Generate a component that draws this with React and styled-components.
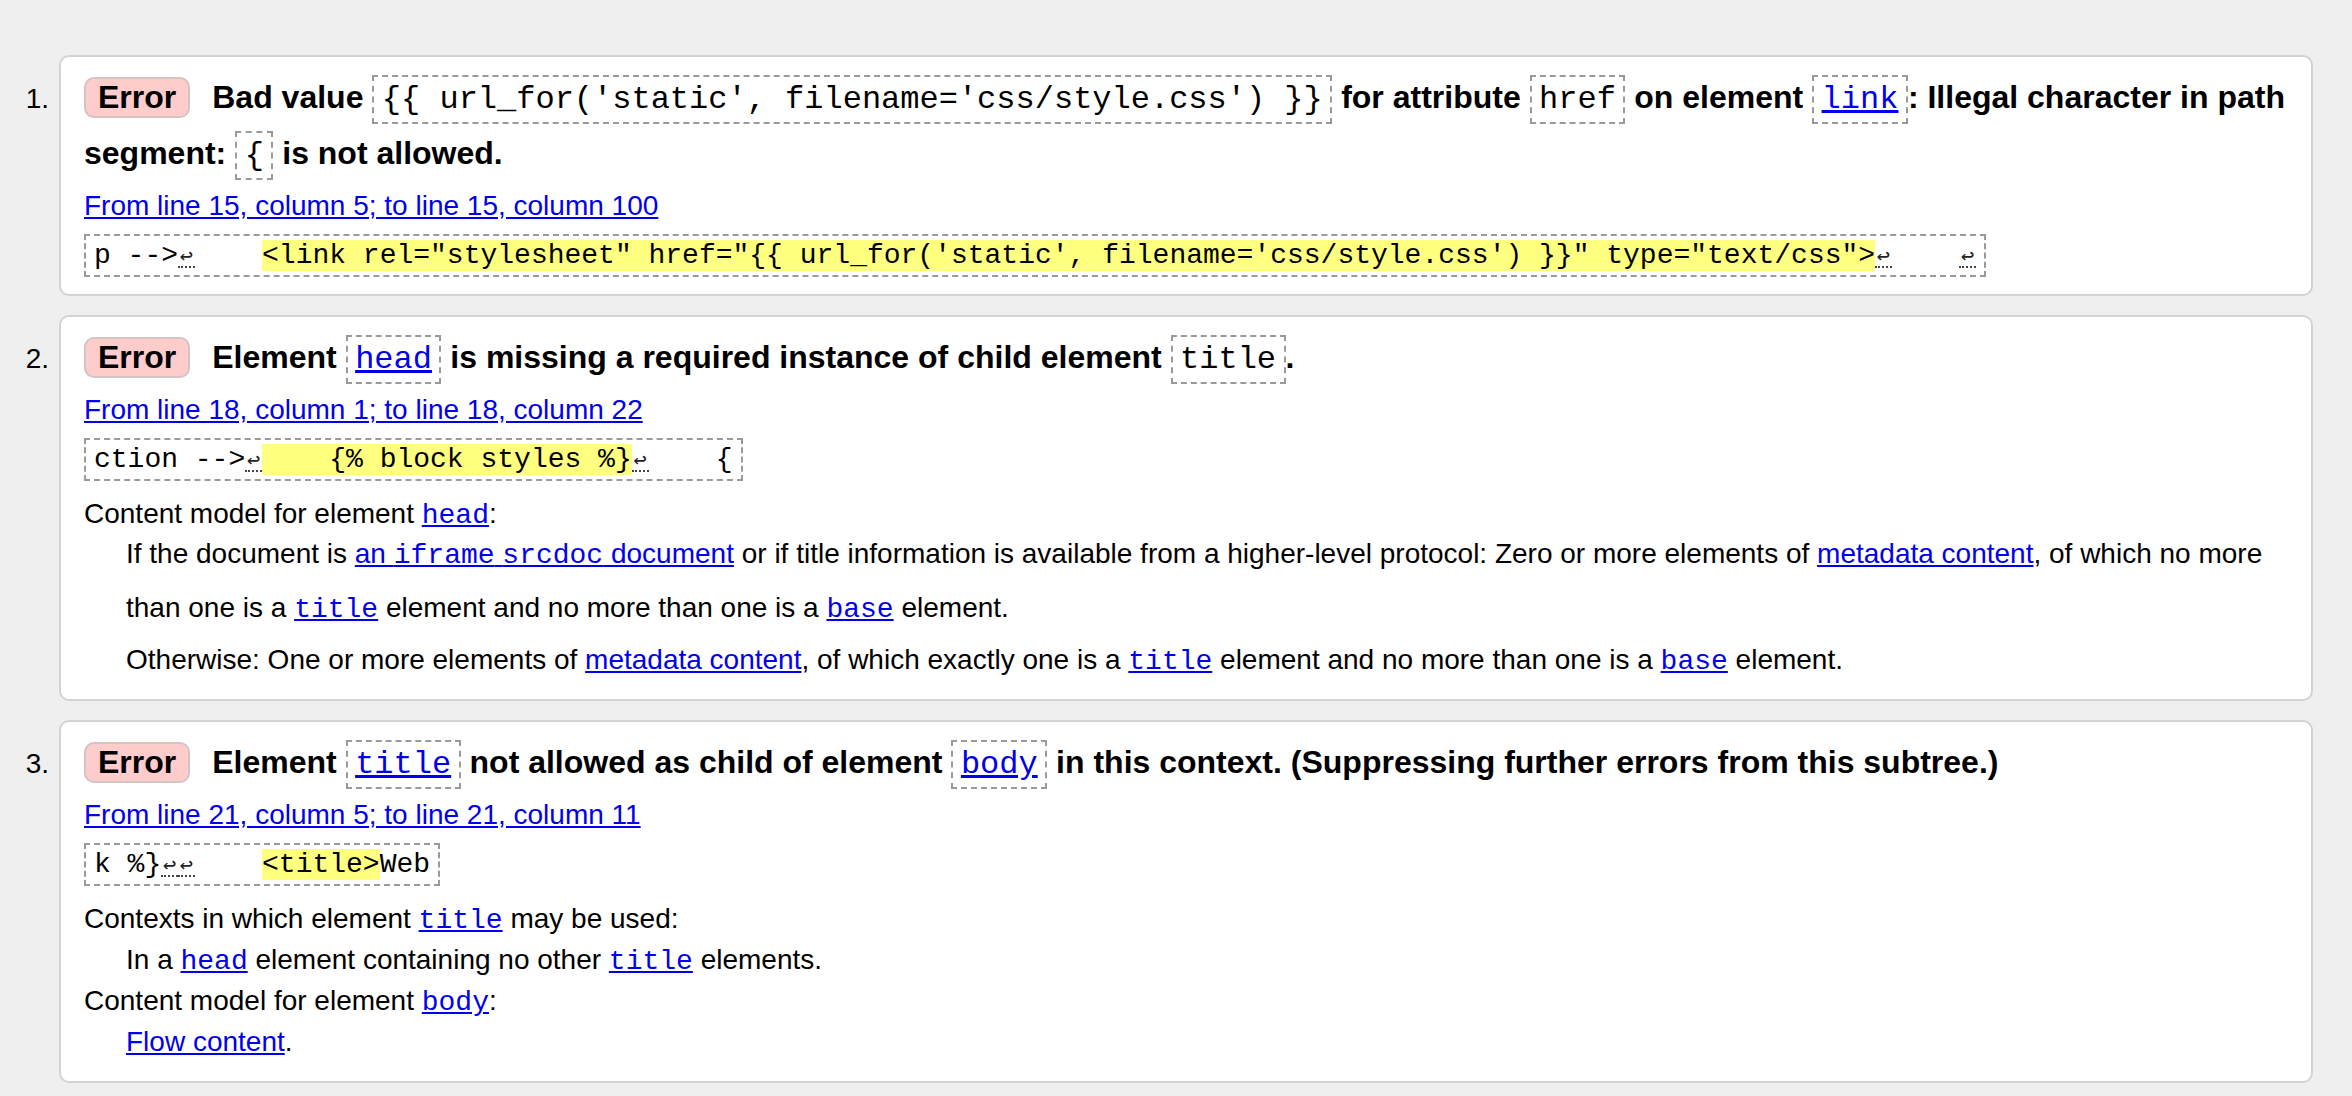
import React from "react";
import styled, { createGlobalStyle } from "styled-components";

const GlobalStyle = createGlobalStyle`
  html, body {
    margin: 0;
    padding: 0;
    background: #efefef;
  }
  body {
    font-family: "Liberation Sans", Arial, Helvetica, sans-serif;
    font-size: 28px;
    color: #000;
  }
`;

const Page = styled.ol`
  list-style: none;
  margin: 0;
  padding: 55px 39px 14px 0;
  display: flex;
  flex-direction: column;
  gap: 19px;
`;

const Item = styled.li`
  display: flex;
  align-items: baseline;
`;

const Num = styled.span`
  flex: none;
  width: 59px;
  box-sizing: border-box;
  padding-right: 10px;
  text-align: right;
  font-size: 28px;
`;

const Card = styled.div`
  flex: 1;
  min-width: 0;
  background: #fff;
  border: 2px solid #d3d3d3;
  border-radius: 10px;
  padding: 12px 8px 17px 23px;
`;

const Title = styled.p`
  margin: 0;
  font-weight: bold;
  font-size: 32px;
  line-height: 56px;
`;

const Badge = styled.span`
  display: inline-block;
  background: #ffcccc;
  border: 2px solid #d4c4c4;
  border-radius: 10px;
  padding: 1px 12px;
  line-height: 35px;
  margin-right: 22px;
`;

const CodeBox = styled.code`
  font-family: "Liberation Mono", "Courier New", monospace;
  font-size: 32px;
  font-weight: normal;
  line-height: 1;
  border: 2px dashed #9a9a9a;
  padding: 4px 7.5px;
`;

const A = styled.a`
  color: #0000ee;
  text-decoration: underline;
`;

const Mono = styled.code`
  font-family: "Liberation Mono", "Courier New", monospace;
  font-size: inherit;
  line-height: 1;
`;

const Location = styled.p`
  margin: 4px 0 0;
  line-height: 41px;
`;

const Extract = styled.div`
  width: fit-content;
  margin-top: 8px;
  border: 2px dashed #9a9a9a;
  padding: 4px 8px;
  font-family: "Liberation Mono", "Courier New", monospace;
  font-size: 28px;
  line-height: 31px;
  white-space: pre;
`;

const Hl = styled.span`
  background: #ffff80;
`;

const Lf = styled.span`
  display: inline-block;
  width: 16.8px;
  font-family: "DejaVu Sans Mono", "DejaVu Sans", monospace;
  font-size: 22px;
  line-height: 20px;
  text-align: center;
  color: #222;
  border-bottom: 2px dotted #444;
  box-sizing: border-box;
`;

const Details = styled.dl`
  margin: 12px 0 2px;
  line-height: 41px;
`;

const Term = styled.dt`
  margin: 0;
`;

const Desc = styled.dd`
  margin: 0 0 0 42px;
`;

const Para = styled.p`
  margin: ${(p) => (p.$first ? "-7px 0 0" : "4px 0 0")};
  line-height: ${(p) => (p.$first ? "54px" : "41px")};
`;

const LF = () => <Lf>↩</Lf>;

export default function App() {
  return (
    <>
      <GlobalStyle />
      <Page>
        <Item>
          <Num>1.</Num>
          <Card>
            <Title>
              <Badge>Error</Badge>Bad value{" "}
              <CodeBox>{"{{ url_for('static', filename='css/style.css') }}"}</CodeBox>{" "}
              for attribute <CodeBox>href</CodeBox> on element{" "}
              <CodeBox>
                <A href="#">link</A>
              </CodeBox>
              : Illegal character in path segment: <CodeBox>{"{"}</CodeBox> is not allowed.
            </Title>
            <Location>
              <A href="#">From line 15, column 5; to line 15, column 100</A>
            </Location>
            <Extract>
              {"p -->"}
              <LF />
              {"    "}
              <Hl>{`<link rel="stylesheet" href="{{ url_for('static', filename='css/style.css') }}" type="text/css">`}</Hl>
              <LF />
              {"    "}
              <LF />
            </Extract>
          </Card>
        </Item>

        <Item>
          <Num>2.</Num>
          <Card>
            <Title>
              <Badge>Error</Badge>Element{" "}
              <CodeBox>
                <A href="#">head</A>
              </CodeBox>{" "}
              is missing a required instance of child element <CodeBox>title</CodeBox>.
            </Title>
            <Location>
              <A href="#">From line 18, column 1; to line 18, column 22</A>
            </Location>
            <Extract>
              {"ction -->"}
              <LF />
              <Hl>{"    {% block styles %}"}</Hl>
              <LF />
              {"    {"}
            </Extract>
            <Details>
              <Term>
                Content model for element{" "}
                <A href="#">
                  <Mono>head</Mono>
                </A>
                :
              </Term>
              <Desc>
                <Para $first>
                  If the document is{" "}
                  <A href="#">
                    an <Mono>iframe</Mono> <Mono>srcdoc</Mono> document
                  </A>{" "}
                  or if title information is available from a higher-level protocol: Zero or more
                  elements of <A href="#">metadata content</A>, of which no more than one is a{" "}
                  <A href="#">
                    <Mono>title</Mono>
                  </A>{" "}
                  element and no more than one is a{" "}
                  <A href="#">
                    <Mono>base</Mono>
                  </A>{" "}
                  element.
                </Para>
                <Para>
                  Otherwise: One or more elements of <A href="#">metadata content</A>, of which
                  exactly one is a{" "}
                  <A href="#">
                    <Mono>title</Mono>
                  </A>{" "}
                  element and no more than one is a{" "}
                  <A href="#">
                    <Mono>base</Mono>
                  </A>{" "}
                  element.
                </Para>
              </Desc>
            </Details>
          </Card>
        </Item>

        <Item>
          <Num>3.</Num>
          <Card>
            <Title>
              <Badge>Error</Badge>Element{" "}
              <CodeBox>
                <A href="#">title</A>
              </CodeBox>{" "}
              not allowed as child of element{" "}
              <CodeBox>
                <A href="#">body</A>
              </CodeBox>{" "}
              in this context. (Suppressing further errors from this subtree.)
            </Title>
            <Location>
              <A href="#">From line 21, column 5; to line 21, column 11</A>
            </Location>
            <Extract>
              {"k %}"}
              <LF />
              <LF />
              {"    "}
              <Hl>{"<title>"}</Hl>
              {"Web"}
            </Extract>
            <Details>
              <Term>
                Contexts in which element{" "}
                <A href="#">
                  <Mono>title</Mono>
                </A>{" "}
                may be used:
              </Term>
              <Desc>
                In a{" "}
                <A href="#">
                  <Mono>head</Mono>
                </A>{" "}
                element containing no other{" "}
                <A href="#">
                  <Mono>title</Mono>
                </A>{" "}
                elements.
              </Desc>
              <Term>
                Content model for element{" "}
                <A href="#">
                  <Mono>body</Mono>
                </A>
                :
              </Term>
              <Desc>
                <A href="#">Flow content</A>.
              </Desc>
            </Details>
          </Card>
        </Item>
      </Page>
    </>
  );
}
